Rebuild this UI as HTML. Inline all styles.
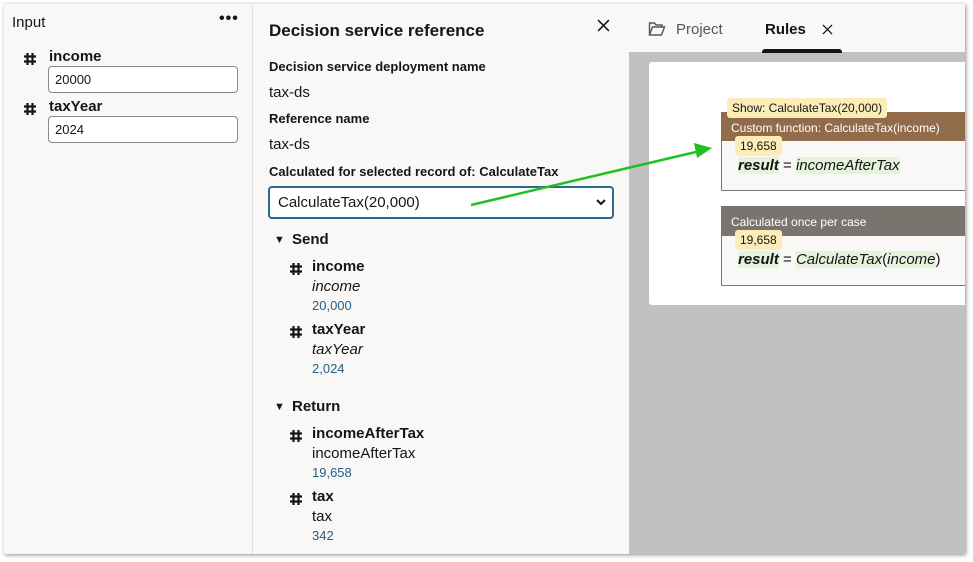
<!DOCTYPE html>
<html><head><style>
*{box-sizing:border-box;margin:0;padding:0}
body{width:973px;height:562px;background:#fff;font-family:"Liberation Sans",sans-serif;position:relative;overflow:hidden;color:#161513}
.win{position:absolute;left:4px;top:4px;width:961px;height:550px;box-shadow:1px 1px 4px rgba(0,0,0,.45);overflow:hidden;background:#f9f8f6}
.a{position:absolute;white-space:nowrap}
.left{position:absolute;left:0;top:0;width:249px;height:550px;background:#f9f8f6;border-right:1px solid #e4e1dc}
.mid{position:absolute;left:250px;top:0;width:375px;height:550px;background:#f9f8f6}
.right{position:absolute;left:625px;top:0;width:336px;height:550px;background:#c1c1c1}
.inp{position:absolute;background:#fff;border:1px solid #8a8784;border-radius:4px;font-size:13px;padding:5px 6px}
.b{font-weight:bold}
.blue{color:#235f86;font-size:13px}
.tag{position:absolute;background:#fcedb8;border-radius:3px;font-size:12px;padding:3px 5px;color:#161513}
.g{background:#e3f3dc}
</style></head><body>
<svg width="0" height="0" style="position:absolute"><defs><symbol id="h" viewBox="0 0 14 14"><path d="M4.5 1v12M9.5 1v12M1 4.5h12M1 9.5h12" stroke="#161513" stroke-width="2.2" fill="none"/></symbol><symbol id="x" viewBox="0 0 12 12"><path d="M1 1l10 10M11 1L1 11" stroke="#161513" stroke-width="1.4" fill="none"/></symbol></defs></svg>
<div class="win">
<div class="left">
<div class="a" style="left:8px;top:10px;font-size:15px">Input</div>
<div class="a" style="left:215px;top:6px;font-size:16px;font-weight:bold;letter-spacing:1px">•••</div>
<svg class="a" style="left:19px;top:48px" width="14" height="14"><use href="#h"/></svg>
<div class="a b" style="left:45px;top:44px;font-size:15px">income</div>
<div class="inp" style="left:44px;top:62px;width:190px;height:27px">20000</div>
<svg class="a" style="left:19px;top:98px" width="14" height="14"><use href="#h"/></svg>
<div class="a b" style="left:45px;top:94px;font-size:15px">taxYear</div>
<div class="inp" style="left:44px;top:112px;width:190px;height:27px">2024</div>
</div>
<div class="mid">
<div class="a b" style="left:15px;top:17px;font-size:17px">Decision service reference</div>
<svg class="a" style="left:343px;top:15px" width="13" height="13"><use href="#x"/></svg>
<div class="a b" style="left:15px;top:55px;font-size:13px">Decision service deployment name</div>
<div class="a" style="left:15px;top:80px;font-size:15px">tax-ds</div>
<div class="a b" style="left:15px;top:107px;font-size:13px">Reference name</div>
<div class="a" style="left:15px;top:132px;font-size:15px">tax-ds</div>
<div class="a b" style="left:15px;top:160px;font-size:13px">Calculated for selected record of: CalculateTax</div>
<div class="a" style="left:14px;top:182px;width:346px;height:33px;background:#fff;border:2px solid #2a6a8a;border-radius:4px;font-size:15px;padding:6px 8px">CalculateTax(20,000)<svg style="position:absolute;right:6px;top:11px" width="10" height="7"><path d="M1 1l4 4 4-4" stroke="#161513" stroke-width="2" fill="none"/></svg></div>
<div class="a" style="left:20px;top:230px;font-size:11px">▼</div>
<div class="a b" style="left:38px;top:227px;font-size:15px">Send</div>
<svg class="a" style="left:35px;top:258px" width="14" height="14"><use href="#h"/></svg>
<div class="a b" style="left:58px;top:254px;font-size:15px">income</div>
<div class="a" style="left:58px;top:274px;font-size:15px;font-style:italic">income</div>
<div class="a blue" style="left:58px;top:294px">20,000</div>
<svg class="a" style="left:35px;top:321px" width="14" height="14"><use href="#h"/></svg>
<div class="a b" style="left:58px;top:317px;font-size:15px">taxYear</div>
<div class="a" style="left:58px;top:337px;font-size:15px;font-style:italic">taxYear</div>
<div class="a blue" style="left:58px;top:357px">2,024</div>
<div class="a" style="left:20px;top:397px;font-size:11px">▼</div>
<div class="a b" style="left:38px;top:394px;font-size:15px">Return</div>
<svg class="a" style="left:35px;top:425px" width="14" height="14"><use href="#h"/></svg>
<div class="a b" style="left:58px;top:421px;font-size:15px">incomeAfterTax</div>
<div class="a" style="left:58px;top:441px;font-size:15px">incomeAfterTax</div>
<div class="a blue" style="left:58px;top:461px">19,658</div>
<svg class="a" style="left:35px;top:488px" width="14" height="14"><use href="#h"/></svg>
<div class="a b" style="left:58px;top:484px;font-size:15px">tax</div>
<div class="a" style="left:58px;top:504px;font-size:15px">tax</div>
<div class="a blue" style="left:58px;top:524px">342</div>
</div>
<div class="right">
<div class="a" style="left:0;top:0;width:336px;height:48px;background:#f9f8f6"></div>
<svg class="a" style="left:19px;top:17px" width="18" height="16" viewBox="0 0 18 16"><path d="M1.5 14V2h5l1.5 2h6v2M1.5 14l3-8h12l-3 8z" fill="none" stroke="#555" stroke-width="1.4"/></svg>
<div class="a" style="left:47px;top:17px;font-size:15px;color:#555">Project</div>
<div class="a b" style="left:136px;top:17px;font-size:15px">Rules</div>
<svg class="a" style="left:193px;top:20px" width="11" height="11"><use href="#x"/></svg>
<div class="a" style="left:133px;top:45px;width:80px;height:4px;background:#161513;border-radius:3px 3px 0 0"></div>
<div class="a" style="left:20px;top:58px;width:330px;height:243px;background:#fff;border-radius:3px"></div>
<div class="a" style="left:92px;top:108px;width:250px;height:79px;background:#f9f8f6;border:1px solid #7a7775;border-right:none"></div>
<div class="a" style="left:92px;top:108px;width:250px;height:29px;background:#926b4a;color:#fff;font-size:12px;padding:9px 10px 0">Custom function: CalculateTax(income)</div>
<div class="tag" style="left:98px;top:94px">Show: CalculateTax(20,000)</div>
<div class="tag" style="left:106px;top:132px">19,658</div>
<div class="a" style="left:109px;top:153px;font-size:15px"><b class="g"><i>result</i></b> = <i class="g">incomeAfterTax</i></div>
<div class="a" style="left:92px;top:202px;width:250px;height:80px;background:#f9f8f6;border:1px solid #7a7775;border-right:none"></div>
<div class="a" style="left:92px;top:202px;width:250px;height:30px;background:#7a746f;color:#fff;font-size:12px;padding:9px 10px 0">Calculated once per case</div>
<div class="tag" style="left:106px;top:226px">19,658</div>
<div class="a" style="left:109px;top:247px;font-size:15px"><b class="g"><i>result</i></b> = <i class="g">CalculateTax</i>(<i class="g">income</i>)</div>
</div>
</div>
<svg class="a" style="left:0;top:0" width="973" height="562"><line x1="471" y1="205" x2="700" y2="151" stroke="#20c020" stroke-width="2.5"/><polygon points="712,148 694,143 697,158" fill="#20c020"/></svg>
</body></html>
